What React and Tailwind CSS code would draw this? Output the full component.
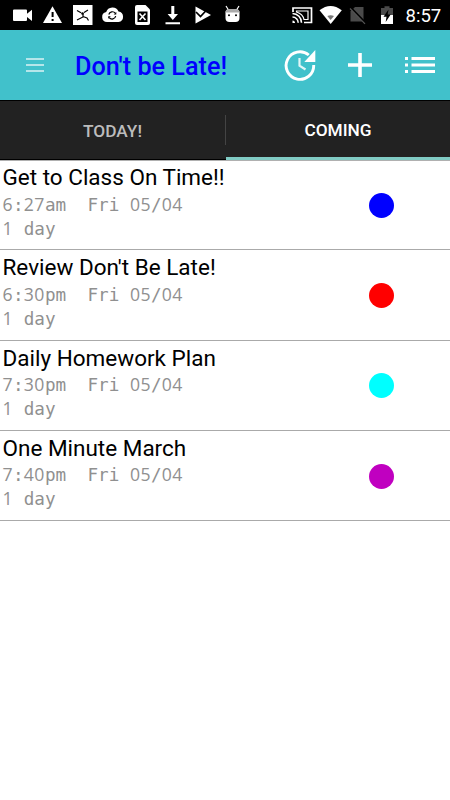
import { useState } from "react";

const EVENTS = [
  { title: "Get to Class On Time!!", time: "6:27am", date: "Fri 05/04", repeat: "1 day", dot: "bg-[#0000ff]" },
  { title: "Review Don't Be Late!", time: "6:30pm", date: "Fri 05/04", repeat: "1 day", dot: "bg-[#ff0000]" },
  { title: "Daily Homework Plan", time: "7:30pm", date: "Fri 05/04", repeat: "1 day", dot: "bg-[#00ffff]" },
  { title: "One Minute March", time: "7:40pm", date: "Fri 05/04", repeat: "1 day", dot: "bg-[#c000c0]" },
];

function StatusBar() {
  return (
    <div className="h-[30px] bg-black flex items-center text-white">
      <svg width="250" height="30" viewBox="0 0 250 30" fill="#fff">
        {/* camera */}
        <path d="M14 9.500h12q1 0 1 1v3.200l5-4v11.200l-5-4v3q0 1-1 1H14q-1 0-1-1v-9.400q0-1 1-1z" />
        {/* warning */}
        <path d="M52.500 6.300L62 23H43z" />
        <path d="M51.600 12h2v5h-2zM51.600 19h2v2h-2z" fill="#000" />
        {/* runner */}
        <path d="M73 5h19.500v20H73z" />
        <path d="M77 10.500l4 2.200M84 12.500l4-2.500M83 13.500v3.500l-6 3M83 16.500l4 1.500 1.500 2.500" fill="none" stroke="#000" strokeWidth="1.200" />
        <circle cx="82.500" cy="13.500" r="1.300" fill="#000" />
        {/* cloud sync */}
        <path d="M107 22a5 5 0 0 1-.8-9.900A6.500 6.500 0 0 1 118.500 11.500a5.300 5.300 0 0 1 0 10.500z" />
        <path d="M108.800 14.500a3.700 3.700 0 0 1 6.500-1.300M115.700 16a3.700 3.700 0 0 1-6.500 1.700" fill="none" stroke="#000" strokeWidth="1.200" />
        <path d="M116.300 12v2.600h-2.600zM108.200 18.800v-2.600h2.600z" fill="#000" />
        {/* sim card */}
        <path d="M137 5h8.500l4.500 4.500V23q0 2-2 2h-11q-2 0-2-2V7q0-2 2-2z" />
        <path d="M137.500 11.500h10V22h-10z" fill="#000" />
        <path d="M139.500 13.500l6 6.500M145.500 13.500l-6 6.500" stroke="#fff" strokeWidth="1.600" />
        {/* download */}
        <path d="M171.300 6h3v8h3.700l-5.200 6-5.200-6h3.700zM165.500 22.300h14.500v2h-14.500z" />
        {/* play check */}
        <path d="M195.500 6.500L211 15l-15.500 8.500z" />
        <path d="M196 12l4.500 4.500 8-8.500" fill="none" stroke="#000" strokeWidth="1.700" />
        {/* android head */}
        <path d="M226 6l2.500 4M239 6l-2.500 4" stroke="#fff" strokeWidth="1.200" />
        <path d="M225.500 12.500q0-3.500 4-3.500h6q4 0 4 3.500V18q0 4-4 4h-6q-4 0-4-4z" />
        <path d="M225.500 12.500q0-3.500 4-3.500h6q4 0 4 3.500z" fill="#aaa" />
        <circle cx="229" cy="15.200" r="1" fill="#000" />
        <circle cx="236" cy="15.200" r="1" fill="#000" />
      </svg>
      <svg className="ml-[40px]" width="106" height="30" viewBox="290 0 106 30" fill="#fff">
        {/* cast */}
        <path d="M293 12V8h18.500v14.500H304" fill="none" stroke="#fff" strokeWidth="1.700" />
        <path d="M296.500 11h11.500v8.500h-4q-1-5.500-7.500-7.500z" fill="none" stroke="#fff" strokeWidth="1.200" />
        <path d="M292.500 13.500a9 9 0 0 1 9 9.300M292.500 17a5.700 5.700 0 0 1 5.700 5.800" fill="none" stroke="#fff" strokeWidth="1.600" />
        <path d="M292.500 20.500a2.500 2.500 0 0 1 2.500 2.500h-2.500z" />
        {/* wifi */}
        <path d="M319.500 10.300Q330.500 1.800 341.800 10.300L330.700 24z" />
        <path d="M327.300 16q3.400-1.500 6.700 0l-3.400 4z" fill="#777" />
        {/* no sim */}
        <path d="M355 7h8.500v14.500h-13V11.500z" fill="#4a4a4a" />
        <path d="M350.500 7.500l15.500 16" stroke="#000" strokeWidth="2.200" />
        <path d="M350 8.500l15 15.300" stroke="#555" strokeWidth="1.200" />
        {/* battery */}
        <path d="M384.500 6.200h5V8h3.500v7h-12V8h3.500z" fill="#4a4a4a" />
        <path d="M381 15h12v9h-12z" />
        <path d="M388.500 9.500l-5 7.300h3l-.8 5.200 5-7.500h-3z" fill="#000" />
      </svg>
      <span className="ml-[9.500px] pt-[2px] text-[18.500px] leading-none">8:57</span>
    </div>
  );
}

function Header() {
  return (
    <div className="h-[70px] bg-[#41c1cb] flex items-center">
      <button className="ml-[26px] w-[18px] flex flex-col gap-1">
        <span className="h-0.5 w-full bg-[#b5e6ea]" />
        <span className="h-0.5 w-full bg-[#b5e6ea]" />
        <span className="h-0.5 w-full bg-[#b5e6ea]" />
      </button>
      <h1 className="ml-[31px] w-[208px] pt-[3px] text-[25.200px] font-medium leading-none text-[#0000ff]">Don't be Late!</h1>
      <button>
        <svg width="34" height="34" viewBox="283 48 34 34" fill="none" stroke="#fff">
          <path d="M308.800 55A13.800 13.800 0 1 0 313.700 65" strokeWidth="2.900" />
          <path d="M315.300 50v12h-11z" fill="#fff" stroke="none" />
          <path d="M299.500 58v7.700l6 3.800" strokeWidth="2.200" strokeOpacity="0.85" />
        </svg>
      </button>
      <button className="ml-[30px]">
        <svg width="26" height="26" viewBox="0 0 26 26" fill="#fff">
          <path d="M11.200 1h3.600v10.200H25v3.600H14.800V25h-3.600V14.800H1v-3.600h10.200z" />
        </svg>
      </button>
      <button className="ml-[31px]">
        <svg width="32" height="18" viewBox="404 56 32 18" fill="#fff">
          <path d="M405 57h3v3h-3zM405 63.500h3v3h-3zM405 70h3v3h-3zM411.500 57H435v3h-23.500zM411.500 63.500H435v3h-23.500zM411.500 70H435v3h-23.500z" />
        </svg>
      </button>
    </div>
  );
}

function Tabs({ active, onChange }) {
  return (
    <div className="h-[60px] bg-[#222222] border-t border-black flex text-[17.300px] font-medium">
      <button
        className={`w-[226px] flex items-center border-b ${active === "today" ? "border-[#80cbc4] text-white" : "border-black text-[#bcbcbc]"}`}
        onClick={() => onChange("today")}
      >
        <span className="flex-1 pt-[3px] text-center">TODAY!</span>
        <span className="h-[30px] w-px bg-[#444]" />
      </button>
      <button
        className={`flex-1 pt-[4px] border-b-[3px] ${active === "coming" ? "border-[#80cbc4] text-white" : "border-black text-[#bcbcbc]"}`}
        onClick={() => onChange("coming")}
      >
        COMING
      </button>
    </div>
  );
}

// digits use the plain undotted zero, spaced out to the mono cell
function MonoText({ text }) {
  return text.split(/(\d+)/).map((part, i) =>
    /\d/.test(part) ? (
      <span key={i} className="font-['Open_Sans',sans-serif] tracking-[0.500px]">
        {part}
      </span>
    ) : (
      part
    )
  );
}

function EventRow({ event }) {
  return (
    <li className="h-[90.300px] flex border-b border-[#aaaaaa] pl-[2.500px]">
      <div className="w-[366px]">
        <p className="pt-1 pb-[1.600px] text-[22.500px] leading-[26px] text-black whitespace-nowrap">{event.title}</p>
        <div className="font-['DejaVu_Sans_Mono',monospace] text-[17.650px] leading-[24px] text-[#909090] whitespace-pre">
          <p className="h-6">
            <MonoText text={`${event.time}  ${event.date}`} />
          </p>
          <p className="h-6">
            <MonoText text={event.repeat} />
          </p>
        </div>
      </div>
      <div className="flex items-center pt-px">
        <span className={`size-[25px] rounded-full ${event.dot}`} />
      </div>
    </li>
  );
}

export default function App() {
  const [tab, setTab] = useState("coming");

  return (
    <div className="w-[450px] h-[800px] bg-white overflow-hidden font-['Roboto',sans-serif]">
      <StatusBar />
      <Header />
      <Tabs active={tab} onChange={setTab} />
      <ul className="shadow-[inset_0_1px_0_#b0b0b0]">
        {EVENTS.map((event) => (
          <EventRow key={event.title} event={event} />
        ))}
      </ul>
    </div>
  );
}
